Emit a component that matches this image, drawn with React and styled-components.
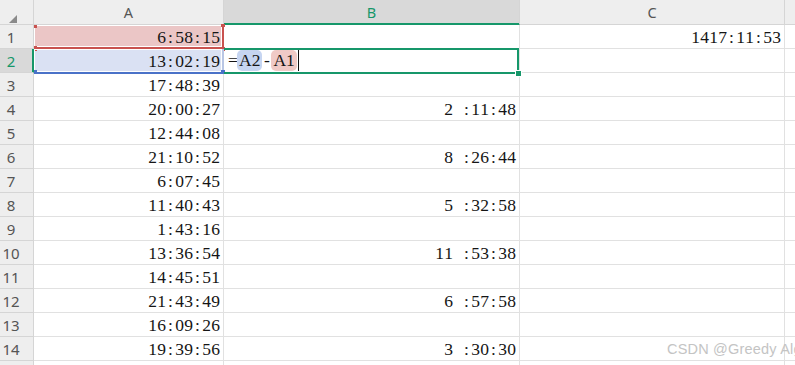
import React from 'react';
import styled, { createGlobalStyle } from 'styled-components';

const GRID = '#e1e1e1';
const HEAD_LINE = '#d5d5d5';
const GREEN = '#16976a';
const RED = '#c9524f';
const BLUE = '#4a72c8';

const Global = createGlobalStyle`
  html, body { margin: 0; padding: 0; background: #fff; }
  body { width: 795px; height: 365px; overflow: hidden; }
`;

const Sheet = styled.div`
  position: relative;
  display: grid;
  grid-template-columns: 34px 190px 296px 265px 40px;
  grid-template-rows: 25px;
  grid-auto-rows: 24px;
  width: 795px;
  height: 365px;
  overflow: hidden;
`;

const Corner = styled.div`
  box-sizing: border-box;
  background: #eeeeee;
  border-right: 1px solid ${HEAD_LINE};
  border-bottom: 1px solid ${HEAD_LINE};
  padding: 9px 0 0 9px;
`;

const ColHead = styled.div`
  box-sizing: border-box;
  display: flex;
  align-items: center;
  justify-content: center;
  background: ${p => (p.$active ? '#d9d9d9' : '#eeeeee')};
  border-right: 1px solid ${HEAD_LINE};
  border-bottom: 1px solid ${p => (p.$active ? GREEN : HEAD_LINE)};
  box-shadow: ${p => (p.$active ? `inset 0 -1px 0 ${GREEN}` : 'none')};
  color: ${p => (p.$active ? GREEN : '#555')};
  font-family: "Noto Sans", "Liberation Sans", sans-serif;
  font-size: 14.5px;
`;

const RowHead = styled.div`
  box-sizing: border-box;
  display: flex;
  align-items: center;
  justify-content: center;
  padding: 1px 11px 0 0;
  background: ${p => (p.$active ? '#d9d9d9' : '#eeeeee')};
  border-right: 1px solid ${p => (p.$active ? GREEN : HEAD_LINE)};
  border-bottom: 1px solid ${HEAD_LINE};
  box-shadow: ${p => (p.$active ? `inset -1px 0 0 ${GREEN}` : 'none')};
  color: ${p => (p.$active ? GREEN : '#555')};
  font-family: "Noto Sans", "Liberation Sans", sans-serif;
  font-size: 15px;
`;

const Cell = styled.div`
  position: relative;
  box-sizing: border-box;
  display: flex;
  align-items: flex-start;
  justify-content: ${p => (p.$left ? 'flex-start' : 'flex-end')};
  padding: ${p => (p.$left ? '1px 0 0 4px' : '2px 3px 0 0')};
  background: ${p => p.$fill || '#fff'};
  border-right: 1px solid ${GRID};
  border-bottom: 1px solid ${GRID};
  font-family: "Liberation Serif", serif;
  font-size: 17.5px;
  line-height: 21px;
  color: #151515;
  white-space: nowrap;
`;

const Ch = styled.span`
  display: inline-block;
  width: 9px;
  text-align: center;
`;

const RefFrame = styled.span`
  position: absolute;
  z-index: 2;
  top: 0;
  left: 0;
  right: -1px;
  bottom: ${p => p.$bottom};
  border-right: 2px solid ${p => p.$side};
  border-bottom: 2px solid ${p => p.$c};
  box-shadow: inset 1px 1px 0 #fff, inset -1px -1px 0 #fff;
  pointer-events: none;
`;

const Dot = styled.span`
  position: absolute;
  z-index: 2;
  width: ${p => p.$w}px;
  height: ${p => p.$h}px;
  background: ${p => p.$c};
`;

const ActiveFrame = styled.span`
  position: absolute;
  z-index: 3;
  top: -1px;
  left: 0;
  right: 0;
  bottom: -2px;
  border: 2px solid ${GREEN};
  border-left: none;
  pointer-events: none;
`;

const FillHandle = styled.span`
  position: absolute;
  z-index: 4;
  right: -2px;
  bottom: -4px;
  width: 5px;
  height: 5px;
  background: ${GREEN};
  box-shadow: 0 0 0 1px #fff;
`;

const RefChip = styled.span`
  display: inline-block;
  height: 21px;
  padding: 0 2px;
  border-radius: 5px;
  background: ${p => p.$c};
`;

const Caret = styled.span`
  display: inline-block;
  width: 1px;
  height: 21px;
  margin-left: 1px;
  background: #111;
`;

const Watermark = styled.div`
  position: absolute;
  left: 667px;
  top: 341px;
  font-family: "Liberation Sans", "Noto Sans", sans-serif;
  font-size: 14.5px;
  letter-spacing: 0.2px;
  color: #c4c4c4;
  white-space: nowrap;
  pointer-events: none;
`;

const Mono = ({ text }) => <>{[...text].map((c, i) => <Ch key={i}>{c}</Ch>)}</>;

const colA = ['6:58:15', '13:02:19', '17:48:39', '20:00:27', '12:44:08', '21:10:52', '6:07:45',
  '11:40:43', '1:43:16', '13:36:54', '14:45:51', '21:43:49', '16:09:26', '19:39:56', ''];
const colB = { 4: '2 :11:48', 6: '8 :26:44', 8: '5 :32:58', 10: '11 :53:38', 12: '6 :57:58', 14: '3 :30:30' };

function Formula() {
  return (
    <>
      <Ch>=</Ch>
      <RefChip $c="#c6d5f1">A2</RefChip>
      <Ch>-</Ch>
      <RefChip $c="#f0cac6">A1</RefChip>
      <Caret />
    </>
  );
}

function CellA({ row, value }) {
  if (row === 1) {
    return (
      <Cell $fill="#ebc6c6">
        <Mono text={value} />
        <RefFrame $c={RED} $side={RED} $bottom="-1px" />
        <Dot $c={RED} $w={3} $h={3} style={{ top: 0, left: 0 }} />
        <Dot $c={RED} $w={3} $h={5} style={{ bottom: -3, left: 0 }} />
        <Dot $c={RED} $w={4} $h={3} style={{ top: -1, right: -2 }} />
        <Dot $c={RED} $w={4} $h={4} style={{ bottom: -3, right: -2 }} />
      </Cell>
    );
  }
  if (row === 2) {
    return (
      <Cell $fill="#dae1f3">
        <Mono text={value} />
        <RefFrame $c={BLUE} $side="#b9c6e4" $bottom="-2px" />
        <Dot $c={BLUE} $w={3} $h={4} style={{ bottom: -2, left: 0 }} />
        <Dot $c={BLUE} $w={4} $h={4} style={{ bottom: -2, right: -2 }} />
      </Cell>
    );
  }
  return <Cell><Mono text={value} /></Cell>;
}

export default function App() {
  return (
    <>
      <Global />
      <Sheet>
        <Corner>
          <svg width="8" height="8" viewBox="0 0 8 8">
            <path d="M8 0 L8 8 L0 8 Z" fill="#8a8a8a" />
          </svg>
        </Corner>
        <ColHead>A</ColHead>
        <ColHead $active>B</ColHead>
        <ColHead>C</ColHead>
        <ColHead />

        {colA.map((value, i) => {
          const row = i + 1;
          return (
            <React.Fragment key={row}>
              <RowHead $active={row === 2}>{row < 15 ? row : ''}</RowHead>
              <CellA row={row} value={value} />
              {row === 2 ? (
                <Cell $left>
                  <Formula />
                  <ActiveFrame />
                  <FillHandle />
                </Cell>
              ) : (
                <Cell>{colB[row] && <Mono text={colB[row]} />}</Cell>
              )}
              <Cell>{row === 1 && <Mono text="1417:11:53" />}</Cell>
              <Cell />
            </React.Fragment>
          );
        })}
        <Watermark>CSDN @Greedy Alg</Watermark>
      </Sheet>
    </>
  );
}
